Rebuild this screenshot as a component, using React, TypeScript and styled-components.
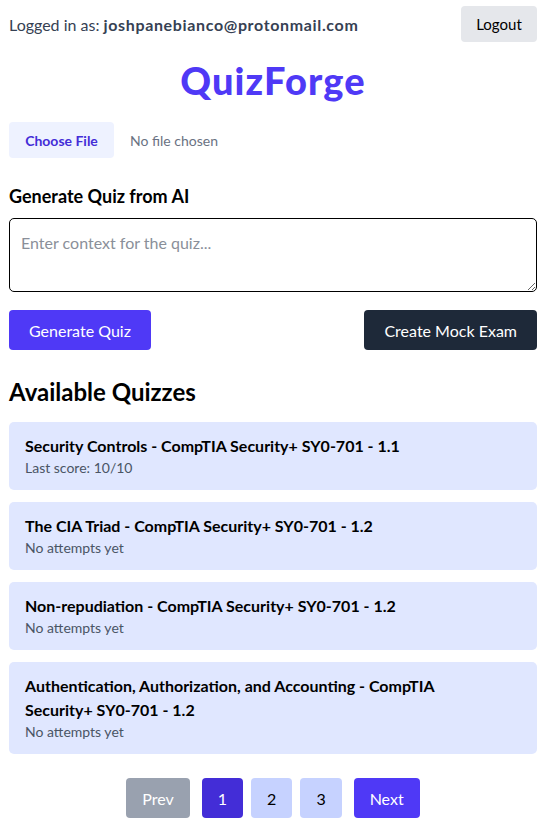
import React from "react";
import styled, { createGlobalStyle } from "styled-components";

const Global = createGlobalStyle`
  * { box-sizing: border-box; }
  html, body { margin: 0; padding: 0; background: #ffffff; }
  body { font-family: Lato, "Noto Sans", sans-serif; color: #000; }
`;

const Page = styled.div`
  padding: 6px 11px 16px 9px;
  display: flex;
  flex-direction: column;
`;

const TopBar = styled.div`
  display: flex;
  justify-content: space-between;
  align-items: center;
`;

const UserText = styled.span`
  font-size: 16px;
  color: #364153;
  b { font-weight: 700; letter-spacing: 0.65px; }
`;

const GrayButton = styled.button`
  font-family: inherit;
  font-size: 15px;
  height: 36px;
  width: 76px;
  border: none;
  border-radius: 4px;
  background: #e5e7eb;
  color: #000;
`;

const Title = styled.h1`
  margin: 16px 0 0;
  text-align: center;
  font-size: 38px;
  line-height: 44px;
  font-weight: 900;
  letter-spacing: 0.03em;
  color: #4f39f6;
`;

const FileRow = styled.div`
  margin-top: 20px;
  display: flex;
  align-items: center;
  gap: 16px;
`;

const FileButton = styled.button`
  font-family: inherit;
  height: 36px;
  width: 105px;
  border: none;
  border-radius: 4px;
  background: #eef2ff;
  color: #432dd7;
  font-weight: 700;
  font-size: 14px;
`;

const FileNote = styled.span`
  font-size: 14px;
  color: #6a7282;
`;

const SectionTitle = styled.h2<{ $size: number }>`
  margin: 0;
  font-size: ${(p) => p.$size}px;
  font-weight: 700;
  line-height: ${(p) => Math.round(p.$size * 1.35)}px;
`;

const AiSection = styled.div`
  margin-top: 26px;
  display: flex;
  flex-direction: column;
  gap: 10px;
`;

const TextArea = styled.textarea`
  display: block;
  width: 100%;
  height: 74px;
  border: 1px solid #000;
  border-radius: 5px;
  padding: 14px 11px;
  font-family: inherit;
  font-size: 16px;
  resize: vertical;
  &::placeholder { color: #8a8f99; }
`;

const ActionRow = styled.div`
  margin-top: 18px;
  display: flex;
  justify-content: space-between;
`;

const SolidButton = styled.button<{ $bg: string }>`
  font-family: inherit;
  height: 40px;
  padding: 0 20px;
  border: none;
  border-radius: 4px;
  background: ${(p) => p.$bg};
  color: #fff;
  font-size: 16px;
`;

const QuizSection = styled.div`
  margin-top: 26px;
  display: flex;
  flex-direction: column;
  gap: 14px;
`;

const QuizList = styled.div`
  display: flex;
  flex-direction: column;
  gap: 12px;
`;

const Card = styled.div`
  background: #e0e7ff;
  border-radius: 5px;
  padding: 12px 40px 12px 16px;
`;

const CardTitle = styled.div`
  font-size: 16px;
  font-weight: 700;
  line-height: 24px;
`;

const CardSub = styled.div`
  font-size: 14px;
  line-height: 20px;
  color: #4a5565;
`;

const Pager = styled.div`
  margin-top: 24px;
  display: flex;
  justify-content: center;
  gap: 12px;
`;

const Pages = styled.div`
  display: flex;
  gap: 8px;
`;

const PageButton = styled.button<{ $bg: string; $fg: string }>`
  font-family: inherit;
  height: 40px;
  padding: 0 16px;
  border: none;
  border-radius: 4px;
  background: ${(p) => p.$bg};
  color: ${(p) => p.$fg};
  font-size: 16px;
`;

const quizzes = [
  { title: "Security Controls - CompTIA Security+ SY0-701 - 1.1", sub: "Last score: 10/10" },
  { title: "The CIA Triad - CompTIA Security+ SY0-701 - 1.2", sub: "No attempts yet" },
  { title: "Non-repudiation - CompTIA Security+ SY0-701 - 1.2", sub: "No attempts yet" },
  {
    title: "Authentication, Authorization, and Accounting - CompTIA Security+ SY0-701 - 1.2",
    sub: "No attempts yet",
  },
];

export default function App() {
  return (
    <>
      <Global />
      <Page>
        <TopBar>
          <UserText>
            Logged in as: <b>joshpanebianco@protonmail.com</b>
          </UserText>
          <GrayButton>Logout</GrayButton>
        </TopBar>
        <Title>QuizForge</Title>
        <FileRow>
          <FileButton>Choose File</FileButton>
          <FileNote>No file chosen</FileNote>
        </FileRow>
        <AiSection>
          <SectionTitle $size={18}>Generate Quiz from AI</SectionTitle>
          <TextArea placeholder="Enter context for the quiz..." />
        </AiSection>
        <ActionRow>
          <SolidButton $bg="#4f39f6">Generate Quiz</SolidButton>
          <SolidButton $bg="#1e2939">Create Mock Exam</SolidButton>
        </ActionRow>
        <QuizSection>
          <SectionTitle $size={24}>Available Quizzes</SectionTitle>
          <QuizList>
            {quizzes.map((q) => (
              <Card key={q.title}>
                <CardTitle>{q.title}</CardTitle>
                <CardSub>{q.sub}</CardSub>
              </Card>
            ))}
          </QuizList>
        </QuizSection>
        <Pager>
          <PageButton $bg="#99a1af" $fg="#fff">Prev</PageButton>
          <Pages>
            <PageButton $bg="#432dd7" $fg="#fff">1</PageButton>
            <PageButton $bg="#c6d2ff" $fg="#000">2</PageButton>
            <PageButton $bg="#c6d2ff" $fg="#000">3</PageButton>
          </Pages>
          <PageButton $bg="#4f39f6" $fg="#fff">Next</PageButton>
        </Pager>
      </Page>
    </>
  );
}
